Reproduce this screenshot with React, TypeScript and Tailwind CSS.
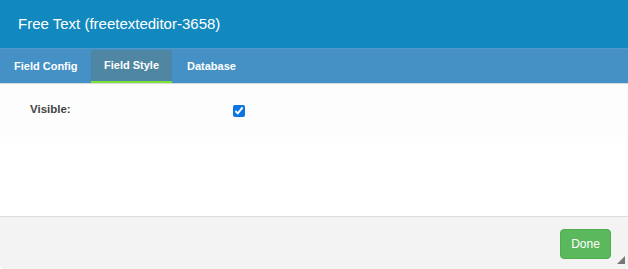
import React from "react";

export default function App() {
  return (
    <div className="w-[628px] h-[269px] bg-white flex flex-col overflow-hidden relative" style={{ fontFamily: '"Liberation Sans", Arial, sans-serif' }}>
      <div className="h-[48px] bg-[#1289be] flex items-center pl-[18px] shrink-0">
        <span className="text-white text-[15px]">Free Text (freetexteditor-3658)</span>
      </div>
      <div className="h-[36px] bg-[#4590c5] border-t border-[#4f98c9] border-b border-b-[#d9d9d9] flex items-end shrink-0">
        <div className="h-[33px] w-[91px] pl-[14px] flex items-center text-white text-[11px] font-bold">Field Config</div>
        <div className="h-[33px] w-[81px] flex items-center justify-center text-white text-[11px] font-bold bg-[#4f86a4] rounded-t-[3px] border-b-2 border-[#7fe03a]">Field Style</div>
        <div className="h-[33px] pl-[15px] flex items-center text-white text-[11px] font-bold">Database</div>
      </div>
      <div className="flex-1 flex flex-col">
        <div className="h-[53px] bg-[#fdfdfd] flex items-center">
          <span className="pl-[30px] w-[233px] text-[11.5px] font-bold text-[#444] -mt-[2px]">Visible:</span>
          <input type="checkbox" defaultChecked className="w-[12px] h-[12px] m-0 accent-[#0b75e0]" />
        </div>
      </div>
      <div className="h-[53px] bg-[#f3f3f3] border-t border-[#dcdcdc] flex items-center justify-end pr-[17px] shrink-0 rounded-b-[4px]">
        <button className="w-[51px] h-[30px] bg-[#5cb85c] border border-[#4cae4c] rounded-[4px] text-white text-[12px] mt-[1px]">Done</button>
      </div>
      <svg className="absolute right-[3px] bottom-[5px]" width="8" height="8" viewBox="0 0 8 8">
        <polygon points="8,0 8,8 0,8" fill="#777" />
      </svg>
    </div>
  );
}
